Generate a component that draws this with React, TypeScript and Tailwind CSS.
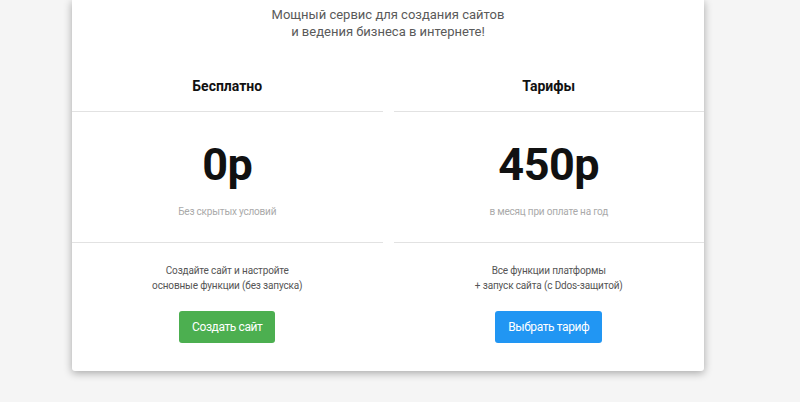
import React from "react";

type Plan = {
  title: string;
  price: string;
  note: string;
  desc: [string, string];
  button: string;
  color: string;
};

const plans: Plan[] = [
  {
    title: "Бесплатно",
    price: "0р",
    note: "Без скрытых условий",
    desc: ["Создайте сайт и настройте", "основные функции (без запуска)"],
    button: "Создать сайт",
    color: "bg-[#4caf50]",
  },
  {
    title: "Тарифы",
    price: "450р",
    note: "в месяц при оплате на год",
    desc: ["Все функции платформы", "+ запуск сайта (с Ddos-защитой)"],
    button: "Выбрать тариф",
    color: "bg-[#2196f3]",
  },
];

export default function App() {
  return (
    <div
      className="h-[402px] w-[800px] overflow-hidden bg-[#f5f5f5] pl-[72px]"
      style={{ fontFamily: "Roboto, 'Noto Sans', sans-serif" }}
    >
      <div className="w-[632px] rounded-b-[3px] bg-white pt-[6px] pb-[28px] shadow-[0_2px_9px_rgba(0,0,0,0.33)]">
        <p className="text-center text-[13px] leading-[17px] text-[#5a5a5a]">
          Мощный сервис для создания сайтов
          <br />
          и ведения бизнеса в интернете!
        </p>
        <div className="mt-[36px] grid grid-cols-2 gap-[11px]">
          {plans.map((p) => (
            <div key={p.title} className="flex flex-col items-center">
              <div className="w-full border-b border-[#e2e2e2] pb-[15px] text-center text-[14px] font-bold leading-[20px] text-[#111]">
                {p.title}
              </div>
              <div className="flex w-full flex-col items-center border-b border-[#e2e2e2] pt-[30px] pb-[22px]">
                <div className="text-[45px] font-bold leading-[46px] tracking-[-0.5px] text-[#111]">{p.price}</div>
                <div className="mt-[16px] text-[10px] leading-[16px] tracking-[-0.2px] text-[#aaa]">{p.note}</div>
              </div>
              <p className="mt-[20px] text-center text-[10px] leading-[15px] tracking-[-0.15px] text-[#555]">
                {p.desc[0]}
                <br />
                {p.desc[1]}
              </p>
              <button
                className={`mt-[18px] h-[32px] rounded-[3px] px-[13px] text-[12px] tracking-[-0.4px] text-white ${p.color}`}
              >
                {p.button}
              </button>
            </div>
          ))}
        </div>
      </div>
    </div>
  );
}
